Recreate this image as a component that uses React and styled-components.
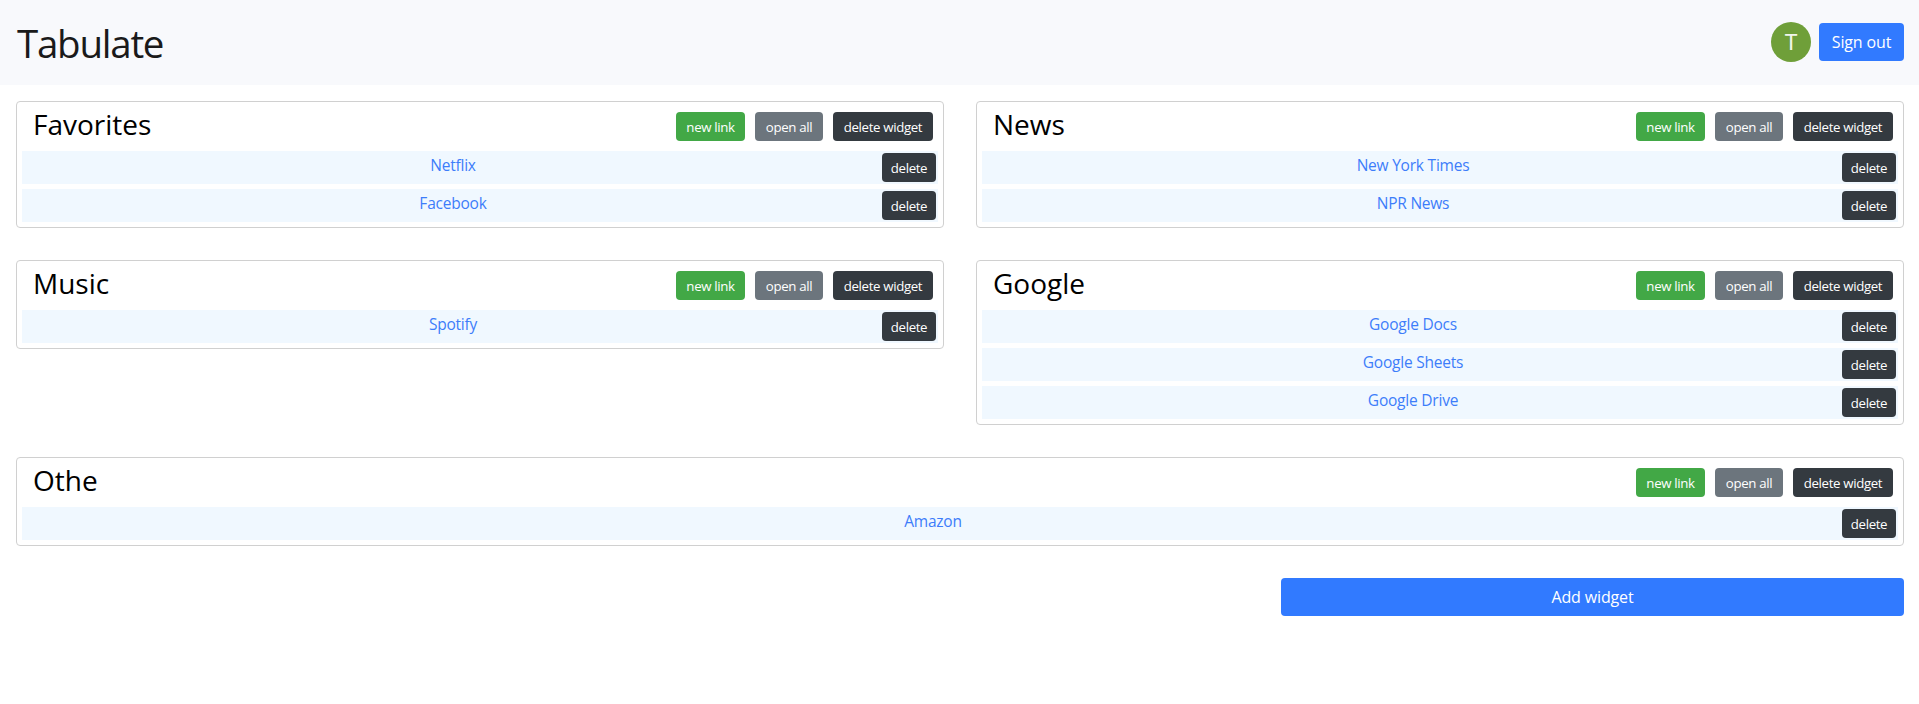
import React from "react";
import styled, { createGlobalStyle } from "styled-components";

const GlobalStyle = createGlobalStyle`
  *, *::before, *::after { box-sizing: border-box; }
  body {
    margin: 0;
    background: #fff;
    color: #212529;
    font-family: "Segoe UI", "Open Sans", sans-serif;
    font-size: 16px;
    line-height: 24px;
  }
  button { font-family: inherit; border: 0; cursor: pointer; }
`;

const Header = styled.header`
  display: flex;
  align-items: center;
  justify-content: space-between;
  height: 85px;
  padding: 0 15px 1px 16px;
  background: #f8f9fc;
`;

const Brand = styled.h1`
  margin: 0;
  padding: 2px 0 0 1px;
  color: #1a1a1a;
  font-size: 38.5px;
  line-height: 48px;
  font-weight: 400;
  letter-spacing: -1.25px;
`;

const Account = styled.div`
  display: flex;
  align-items: center;
  gap: 8px;
`;

const Avatar = styled.div`
  width: 40px;
  height: 40px;
  border-radius: 50%;
  background: #6f9f39;
  color: #f1f6eb;
  font: 400 22px/41px Roboto, sans-serif;
  text-align: center;
`;

const PrimaryButton = styled.button`
  width: ${(p) => p.$width};
  height: 38px;
  padding: 0;
  border-radius: 4px;
  background: #317aff;
  color: #fff;
  font-size: 16px;
  line-height: 38px;
  letter-spacing: -0.15px;
`;

const Board = styled.main`
  display: grid;
  grid-template-columns: 1fr 1fr;
  gap: 32px;
  align-items: start;
  padding: 16px 15px 0 16px;
`;

const Card = styled.section`
  grid-column: ${(p) => (p.$wide ? "1 / -1" : "auto")};
  padding: 0 5px 5px;
  border: 1px solid #d0d0d0;
  border-radius: 4px;
`;

const CardHeader = styled.div`
  display: flex;
  justify-content: space-between;
  height: 49px;
  padding: 10px 5px 0 11px;
`;

const CardTitle = styled.h2`
  margin: -6px 0 0;
  color: #000;
  font: 400 28px/36px "Open Sans", sans-serif;
`;

const Actions = styled.div`
  display: flex;
  gap: 10px;
`;

const tones = { green: "#42a846", gray: "#6c757d", dark: "#343a40" };

const SmallButton = styled.button`
  width: ${(p) => p.$width}px;
  height: 29px;
  padding: 1px 0 0;
  border-radius: 4px;
  background: ${(p) => tones[p.$tone]};
  color: #fff;
  font-size: 13.25px;
  line-height: 28px;
  letter-spacing: -0.35px;
  white-space: nowrap;
`;

const LinkList = styled.div`
  display: grid;
  gap: 5px;
`;

const LinkRow = styled.div`
  display: flex;
  align-items: flex-start;
  height: 33px;
  padding: 2px 2px 0 0;
  background: #f0f8ff;
`;

const LinkText = styled.a`
  flex: 1;
  padding-left: 2px;
  color: #3d7dfa;
  font-size: 15.5px;
  line-height: 25px;
  letter-spacing: -0.22px;
  text-align: center;
  text-decoration: none;
`;

const Footer = styled.footer`
  display: flex;
  justify-content: flex-end;
  padding: 32px 15px 0 16px;
`;

const widgets = [
  { title: "Favorites", links: ["Netflix", "Facebook"] },
  { title: "News", links: ["New York Times", "NPR News"] },
  { title: "Music", links: ["Spotify"] },
  { title: "Google", links: ["Google Docs", "Google Sheets", "Google Drive"] },
  { title: "Othe", links: ["Amazon"], wide: true },
];

function Widget({ title, links, wide }) {
  return (
    <Card $wide={wide}>
      <CardHeader>
        <CardTitle>{title}</CardTitle>
        <Actions>
          <SmallButton $tone="green" $width={69}>new link</SmallButton>
          <SmallButton $tone="gray" $width={68}>open all</SmallButton>
          <SmallButton $tone="dark" $width={100}>delete widget</SmallButton>
        </Actions>
      </CardHeader>
      <LinkList>
        {links.map((name) => (
          <LinkRow key={name}>
            <LinkText href="#">{name}</LinkText>
            <SmallButton $tone="dark" $width={54}>delete</SmallButton>
          </LinkRow>
        ))}
      </LinkList>
    </Card>
  );
}

export default function App() {
  return (
    <>
      <GlobalStyle />
      <Header>
        <Brand>Tabulate</Brand>
        <Account>
          <Avatar>T</Avatar>
          <PrimaryButton $width="85px">Sign out</PrimaryButton>
        </Account>
      </Header>
      <Board>
        {widgets.map((w) => (
          <Widget key={w.title} {...w} />
        ))}
      </Board>
      <Footer>
        <PrimaryButton $width="33%">Add widget</PrimaryButton>
      </Footer>
    </>
  );
}
